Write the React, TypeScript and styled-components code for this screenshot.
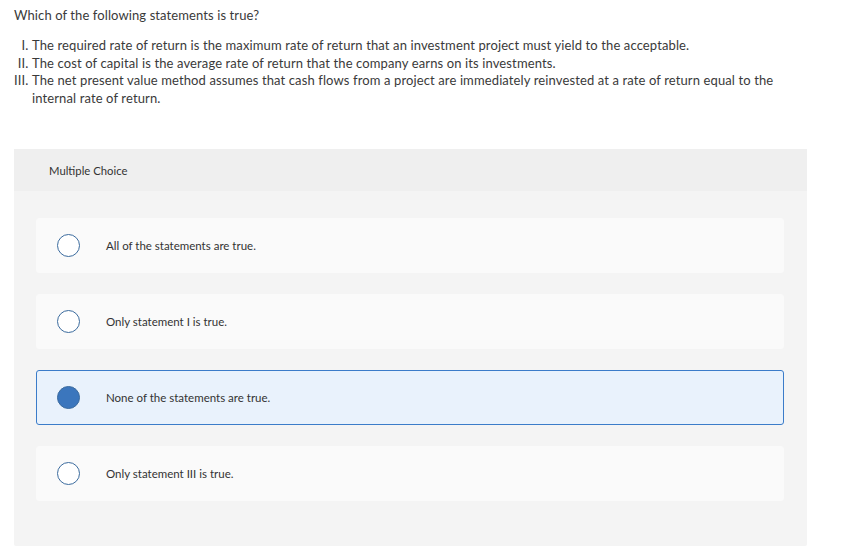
import React from "react";
import styled, { createGlobalStyle } from "styled-components";

const Global = createGlobalStyle`
  html, body { margin: 0; padding: 0; background: #ffffff; }
  body { font-family: "Lato", "Open Sans", sans-serif; color: #3a3a3a; }
`;

const Page = styled.div`
  padding: 6px 36px 0 14px;
`;

const Prompt = styled.p`
  margin: 0;
  font-size: 13px;
  line-height: 18px;
  letter-spacing: 0.1px;
`;

const Statements = styled.ol`
  list-style-type: upper-roman;
  margin: 13px 0 0;
  padding-left: 18px;
  font-size: 13px;
  line-height: 17.6px;
  letter-spacing: 0.12px;
`;

const Panel = styled.section`
  margin-top: 42px;
  width: 793px;
  background: #f4f4f4;
  border-radius: 2px;
  padding-bottom: 45px;
`;

const PanelHeader = styled.div`
  height: 42px;
  display: flex;
  align-items: center;
  padding-left: 35px;
  background: #efefef;
  font-size: 11.3px;
  color: #333333;
`;

const Choices = styled.div`
  display: flex;
  flex-direction: column;
  gap: 21px;
  padding: 27px 23px 0 22px;
`;

const Choice = styled.label<{ $selected?: boolean }>`
  height: 55px;
  box-sizing: border-box;
  display: flex;
  align-items: center;
  gap: 26px;
  padding-left: 20px;
  border-radius: 3px;
  background: ${(p) => (p.$selected ? "#e9f2fc" : "#fafafa")};
  border: 1px solid ${(p) => (p.$selected ? "#3b7cc9" : "#fafafa")};
  font-size: 11.5px;
  color: #333333;
`;

const Radio = styled.span<{ $selected?: boolean }>`
  width: 23px;
  height: 23px;
  box-sizing: border-box;
  border-radius: 50%;
  border: 1.5px solid #3b6b9e;
  background: ${(p) => (p.$selected ? "#3b76bd" : "#ffffff")};
  flex-shrink: 0;
`;

const options = [
  "All of the statements are true.",
  "Only statement I is true.",
  "None of the statements are true.",
  "Only statement III is true.",
];

export default function App() {
  return (
    <Page>
      <Global />
      <Prompt>Which of the following statements is true?</Prompt>
      <Statements>
        <li>
          The required rate of return is the maximum rate of return that an
          investment project must yield to the acceptable.
        </li>
        <li>
          The cost of capital is the average rate of return that the company
          earns on its investments.
        </li>
        <li>
          The net present value method assumes that cash flows from a project
          are immediately reinvested at a rate of return equal to the internal
          rate of return.
        </li>
      </Statements>
      <Panel>
        <PanelHeader>Multiple Choice</PanelHeader>
        <Choices>
          {options.map((o, i) => (
            <Choice key={o} $selected={i === 2}>
              <Radio $selected={i === 2} />
              {o}
            </Choice>
          ))}
        </Choices>
      </Panel>
    </Page>
  );
}
